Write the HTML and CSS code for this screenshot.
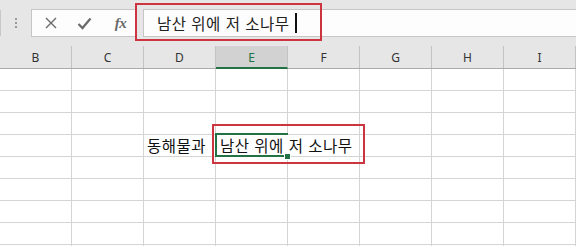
FILE: index.html
```html
<!DOCTYPE html>
<html lang="ko">
<head>
<meta charset="utf-8">
<link rel="stylesheet" href="styles.css">
</head>
<body>
<div class="app">
  <div class="toolbar">
    <div class="namebox-edge"></div>
    <div class="grip"><span></span><span></span><span></span></div>
    <div class="btnbox">
      <span class="btn">
        <svg width="12" height="12" viewBox="0 0 12 12"><path d="M1 1L11 11M11 1L1 11" stroke="#6a6a6a" stroke-width="1.4" fill="none"/></svg>
      </span>
      <span class="btn">
        <svg width="15" height="13" viewBox="0 0 15 13"><path d="M1.5 7L5.5 11L13.5 1.5" stroke="#6a6a6a" stroke-width="2.2" fill="none"/></svg>
      </span>
      <span class="btn fx">fx</span>
    </div>
    <div class="formula">
      <span class="ftext">남산 위에 저 소나무</span><span class="caret"></span>
    </div>
    <div class="hl hl-formula"></div>
  </div>
  <div class="sheet">
    <div class="row header">
      <div class="ch">B</div><div class="ch">C</div><div class="ch">D</div><div class="ch sel">E</div><div class="ch">F</div><div class="ch">G</div><div class="ch">H</div><div class="ch">I</div>
    </div>
    <div class="row"><div class="c"></div><div class="c"></div><div class="c"></div><div class="c"></div><div class="c"></div><div class="c"></div><div class="c"></div><div class="c"></div></div>
    <div class="row"><div class="c"></div><div class="c"></div><div class="c"></div><div class="c"></div><div class="c"></div><div class="c"></div><div class="c"></div><div class="c"></div></div>
    <div class="row"><div class="c"></div><div class="c"></div><div class="c"></div><div class="c"></div><div class="c"></div><div class="c"></div><div class="c"></div><div class="c"></div></div>
    <div class="row"><div class="c"></div><div class="c"></div><div class="c txt">동해물과</div><div class="c active noright"><span class="overflow">남산 위에 저 소나무</span><span class="handle"></span><span class="hl hl-cell"></span></div><div class="c"></div><div class="c"></div><div class="c"></div><div class="c"></div></div>
    <div class="row"><div class="c"></div><div class="c"></div><div class="c"></div><div class="c"></div><div class="c"></div><div class="c"></div><div class="c"></div><div class="c"></div></div>
    <div class="row"><div class="c"></div><div class="c"></div><div class="c"></div><div class="c"></div><div class="c"></div><div class="c"></div><div class="c"></div><div class="c"></div></div>
    <div class="row"><div class="c"></div><div class="c"></div><div class="c"></div><div class="c"></div><div class="c"></div><div class="c"></div><div class="c"></div><div class="c"></div></div>
    <div class="row"><div class="c"></div><div class="c"></div><div class="c"></div><div class="c"></div><div class="c"></div><div class="c"></div><div class="c"></div><div class="c"></div></div>
    <div class="row"><div class="c"></div><div class="c"></div><div class="c"></div><div class="c"></div><div class="c"></div><div class="c"></div><div class="c"></div><div class="c"></div></div>
  </div>
</div>
</body>
</html>
```
FILE: styles.css
```css
html, body {
  margin: 0;
  padding: 0;
  background: #ffffff;
  overflow: hidden;
}
.app {
  width: 576px;
  height: 246px;
  overflow: hidden;
  font-family: "Noto Sans", "Noto Sans CJK KR", sans-serif;
}
.toolbar {
  position: relative;
  height: 46px;
  background: #e6e6e6;
  display: flex;
  align-items: flex-start;
  padding-top: 9px;
  box-sizing: border-box;
}
.namebox-edge {
  width: 1px;
  height: 26px;
  margin-top: 1px;
  background: #c8c8c8;
}
.grip {
  width: 30px;
  height: 28px;
  display: flex;
  flex-direction: column;
  align-items: center;
  justify-content: center;
  gap: 2px;
}
.grip span {
  width: 2px;
  height: 2px;
  background: #9a9a9a;
}
.btnbox {
  width: 105px;
  height: 28px;
  box-sizing: border-box;
  background: #fdfdfd;
  border: 1px solid #c6c6c6;
  display: flex;
  align-items: center;
  padding-left: 2px;
}
.btn {
  width: 36px;
  display: flex;
  justify-content: center;
  align-items: center;
  height: 26px;
}
.fx {
  font-family: "Liberation Serif", "DejaVu Serif", serif;
  font-style: italic;
  font-weight: bold;
  font-size: 15px;
  color: #6a6a6a;
  letter-spacing: -0.5px;
  padding-left: 5px;
  box-sizing: border-box;
}
.formula {
  margin-left: 7px;
  flex: 1;
  height: 28px;
  box-sizing: border-box;
  background: #fdfdfd;
  border: 1px solid #c6c6c6;
  border-right: none;
  display: flex;
  align-items: center;
  padding-left: 13px;
}
.ftext {
  font-family: "Noto Sans CJK KR", sans-serif;
  font-size: 15.5px;
  color: #222;
  letter-spacing: 0.5px;
}
.caret {
  width: 2px;
  height: 20px;
  background: #111;
  margin-left: 5px;
}
.hl {
  position: absolute;
  border: 2px solid #cc3540;
  box-sizing: border-box;
  pointer-events: none;
}
.hl-formula {
  left: 135px;
  top: 3px;
  width: 187px;
  height: 38px;
}
.row {
  display: flex;
  height: 22px;
}
.row.header {
  height: 23px;
  background: #e6e6e6;
  border-bottom: 1px solid #ababab;
  box-sizing: border-box;
}
.ch {
  width: 72px;
  flex: none;
  box-sizing: border-box;
  border-right: 1px solid #c3c3c3;
  display: flex;
  align-items: center;
  justify-content: center;
  font-size: 12px;
  color: #333;
  padding-top: 1px;
}
.ch.sel {
  background: #d2d2d2;
  color: #217346;
  border-bottom: 2px solid #217346;
  margin-bottom: -1px;
}
.c {
  width: 72px;
  flex: none;
  box-sizing: border-box;
  border-right: 1px solid #d4d4d4;
  border-bottom: 1px solid #d4d4d4;
  position: relative;
}
.c.noright {
  border-right-color: transparent;
}
.txt, .overflow {
  font-family: "Noto Sans CJK KR", sans-serif;
  font-size: 15.5px;
  letter-spacing: 0.5px;
  color: #111;
  line-height: 21px;
  white-space: nowrap;
  padding-left: 3px;
}
.active {
  z-index: 1;
}
.active::before {
  content: "";
  position: absolute;
  left: -1px;
  top: -2px;
  width: 73px;
  height: 24px;
  border: 2px solid #217346;
  border-right: none;
  box-sizing: border-box;
}
.overflow {
  position: absolute;
  left: 1px;
  top: 0;
  padding-left: 3px;
}
.handle {
  position: absolute;
  right: -3px;
  bottom: -3px;
  width: 5px;
  height: 5px;
  background: #217346;
  border: 1px solid #fff;
  box-sizing: content-box;
  margin: -1px;
}
.hl-cell {
  left: -4px;
  top: -11px;
  width: 153px;
  height: 40px;
}
```
